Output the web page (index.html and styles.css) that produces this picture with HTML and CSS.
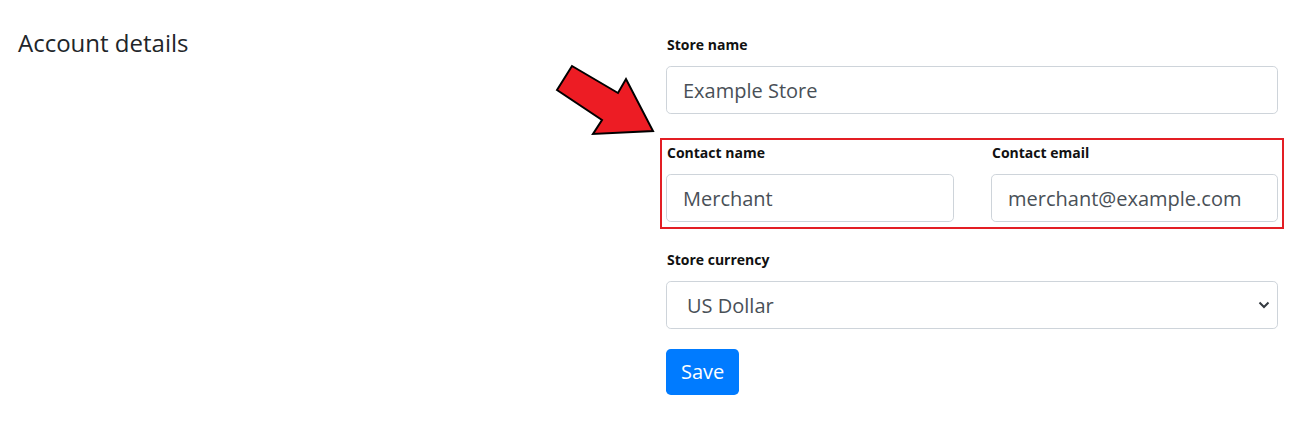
FILE: index.html
```html
<!DOCTYPE html>
<html lang="en">
<head>
<meta charset="utf-8">
<title>Account details</title>
<link rel="stylesheet" href="styles.css">
</head>
<body>
<div class="page">
  <div class="side">
    <h4 class="title">Account details</h4>
  </div>
  <form class="form">
    <div class="group first">
      <label class="label">Store name</label>
      <input class="control" type="text" value="Example Store">
    </div>
    <div class="pair">
      <svg class="arrow" width="110" height="80" viewBox="550 64 110 80" aria-hidden="true">
        <polygon points="557,93 572,69 618,96 626,82 653,134 593,137 602,123" fill="#ed1c24" stroke="#000" stroke-width="2" stroke-linejoin="miter"/>
      </svg>
      <div class="group">
        <label class="label">Contact name</label>
        <input class="control" type="text" value="Merchant">
      </div>
      <div class="group">
        <label class="label">Contact email</label>
        <input class="control" type="text" value="merchant@example.com">
      </div>
    </div>
    <div class="group">
      <label class="label">Store currency</label>
      <div class="select-wrap">
        <select class="control select">
          <option>US Dollar</option>
        </select>
        <svg class="chev" width="12" height="8" viewBox="0 0 12 8" aria-hidden="true">
          <path d="M1.5 1.5 L6 6 L10.5 1.5" fill="none" stroke="#343a40" stroke-width="2"/>
        </svg>
      </div>
    </div>
    <button class="btn" type="button">Save</button>
  </form>
</div>
</body>
</html>
```
FILE: styles.css
```css
* { box-sizing: border-box; }
html, body {
  margin: 0;
  background: #fff;
  font-family: "Open Sans", "Noto Sans", "Liberation Sans", sans-serif;
  color: #212529;
}
.page {
  display: grid;
  grid-template-columns: 1fr 612px;
  padding: 0 14px 0 18px;
}
.title {
  margin: 29px 0 0;
  font-size: 24px;
  font-weight: 400;
  line-height: 1.2;
  color: #212529;
}
.form {
  padding-top: 34px;
  display: flex;
  flex-direction: column;
}
.group {
  display: flex;
  flex-direction: column;
}
.label {
  font-size: 14px;
  font-weight: 700;
  line-height: 21px;
  margin: 0 0 11px 1px;
  color: #111;
}
.control {
  height: 48px;
  width: 100%;
  font-family: inherit;
  font-size: 20px;
  color: #495057;
  background: #fff;
  border: 1px solid #ced4da;
  border-radius: 4.8px;
  padding: 0 16px;
  outline: none;
}
.pair {
  position: relative;
  display: grid;
  grid-template-columns: 288px 287px;
  column-gap: 37px;
  margin-top: 28px;
}
.pair::before {
  content: "";
  position: absolute;
  top: -4px;
  bottom: -7px;
  left: -6px;
  right: -6px;
  border: 2px solid #e31e24;
  pointer-events: none;
}
.arrow {
  position: absolute;
  left: -116px;
  top: -81px;
}
.pair + .group { margin-top: 27px; }
.select-wrap { position: relative; }
.select {
  appearance: none;
  -webkit-appearance: none;
  padding-left: 20px;
}
.chev {
  position: absolute;
  right: 8px;
  top: 20px;
  pointer-events: none;
}
.btn {
  align-self: flex-start;
  margin-top: 20px;
  height: 46px;
  padding: 0 15px;
  border: 0;
  border-radius: 4.8px;
  background: #007bff;
  color: #fff;
  font-family: inherit;
  font-size: 20px;
  line-height: 30px;
}
```
